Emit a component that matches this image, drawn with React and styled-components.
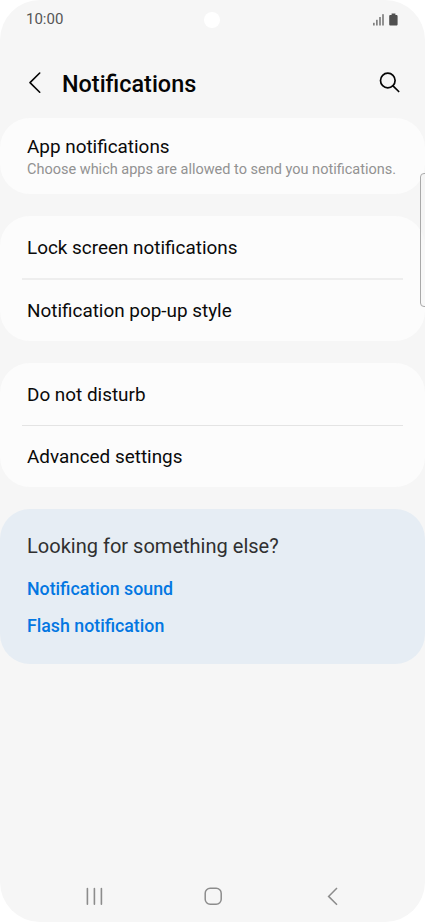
import React, { Fragment } from 'react';
import styled, { createGlobalStyle } from 'styled-components';

const GlobalStyle = createGlobalStyle`
  * {
    box-sizing: border-box;
  }

  body {
    margin: 0;
    background: #ffffff;
    font-family: Roboto, 'Liberation Sans', sans-serif;
  }
`;

const Screen = styled.div`
  position: relative;
  display: flex;
  flex-direction: column;
  width: 425px;
  height: 922px;
  border-radius: 40px;
  background: #f6f6f6;
  overflow: hidden;
`;

const StatusBar = styled.div`
  display: grid;
  grid-template-columns: 1fr 16px 1fr;
  align-items: center;
  height: 39px;
  padding: 0 27px 0 26px;
`;

const Clock = styled.span`
  margin-top: -1px;
  font-size: 15px;
  line-height: 18px;
  color: #555555;
`;

const Camera = styled.span`
  width: 16px;
  height: 16px;
  border-radius: 50%;
  background: #ffffff;
`;

const StatusIcons = styled.div`
  display: flex;
  justify-content: flex-end;
`;

const Header = styled.header`
  display: flex;
  align-items: center;
  height: 79px;
  padding: 8px 24px 0 28px;
`;

const IconButton = styled.button`
  display: flex;
  padding: 0;
  border: none;
  background: none;
`;

const Title = styled.h1`
  flex: 1;
  margin: 2px 0 0 20px;
  font-size: 23.4px;
  font-weight: 500;
  line-height: 28px;
  color: #050505;
`;

const List = styled.main`
  display: flex;
  flex-direction: column;
  gap: 22px;
`;

const Card = styled.section`
  padding: 0 22px;
  border-radius: 30px;
  background: #fcfcfc;
`;

const Row = styled.div`
  display: flex;
  flex-direction: column;
  justify-content: center;
  height: ${(props) => props.$height}px;
  padding: ${(props) => props.$offset}px 5px 0;
`;

const Divider = styled.div`
  height: ${(props) => (props.$soft ? 2 : 1)}px;
  background: ${(props) => (props.$soft ? '#eeeeee' : '#e4e4e4')};
`;

const Label = styled.span`
  font-size: 18.9px;
  line-height: 24px;
  color: #0a0a0a;
`;

const Hint = styled.span`
  font-size: 14.5px;
  line-height: 22px;
  color: #929292;
  white-space: nowrap;
`;

const Suggestions = styled.section`
  display: flex;
  flex-direction: column;
  height: 155px;
  padding: 25px 27px;
  border-radius: 30px;
  background: #e6edf4;
`;

const SuggestionsTitle = styled.h2`
  margin: 0 0 12px;
  font-size: 20.05px;
  font-weight: 400;
  line-height: 25px;
  color: #303030;
`;

const Link = styled.a`
  font-size: 17.75px;
  font-weight: 500;
  line-height: 37px;
  color: #0377e2;
`;

const EdgeHandle = styled.div`
  position: absolute;
  top: 173px;
  right: -6px;
  width: 11px;
  height: 134px;
  border: 1px solid #a9a9a9;
  border-radius: 4px;
  background: rgba(245, 245, 245, 0.6);
`;

const NavBar = styled.nav`
  display: flex;
  justify-content: space-between;
  align-items: center;
  height: 52px;
  margin-top: auto;
  padding: 0 82px 0 84px;
`;

const groups = [
  {
    soft: true,
    rows: [
      { label: 'Lock screen notifications', height: 62, offset: 2 },
      { label: 'Notification pop-up style', height: 61, offset: 0 },
    ],
  },
  {
    soft: false,
    rows: [
      { label: 'Do not disturb', height: 62, offset: 2 },
      { label: 'Advanced settings', height: 61, offset: 0 },
    ],
  },
];

const links = ['Notification sound', 'Flash notification'];

const App = () => {
  return (
    <Screen>
      <GlobalStyle />
      <StatusBar>
        <Clock>10:00</Clock>
        <Camera />
        <StatusIcons>
          <svg width="26" height="14" viewBox="0 0 26 14" fill="#505050">
            <rect x="1.3" y="9.8" width="1.2" height="2.7" />
            <rect x="4.3" y="6.8" width="1.2" height="5.7" />
            <rect x="7.4" y="4" width="1.2" height="8.5" />
            <rect x="10.4" y="1.2" width="1.2" height="11.3" />
            <path d="M19.6 .6h3.8v1.3h.9c.8 0 1.3.5 1.3 1.3v8c0 .9-.5 1.4-1.3 1.4h-5.8c-.8 0-1.3-.5-1.3-1.4v-8c0-.8.5-1.3 1.3-1.3h1.1z" />
          </svg>
        </StatusIcons>
      </StatusBar>

      <Header>
        <IconButton aria-label="Back">
          <svg width="14" height="22" viewBox="0 0 14 22" fill="none" stroke="#050505" strokeWidth="1.6">
            <path d="M11.7 1 2 10.6l9.7 9.6" strokeLinecap="round" strokeLinejoin="round" />
          </svg>
        </IconButton>
        <Title>Notifications</Title>
        <IconButton aria-label="Search">
          <svg width="22" height="22" viewBox="0 0 22 22" fill="none" stroke="#050505" strokeWidth="1.7">
            <circle cx="8.8" cy="8.5" r="7.3" />
            <path d="m14 13.8 5.7 5.7" strokeLinecap="round" />
          </svg>
        </IconButton>
      </Header>

      <List>
        <Card>
          <Row $height={76} $offset={4}>
            <Label>App notifications</Label>
            <Hint>Choose which apps are allowed to send you notifications.</Hint>
          </Row>
        </Card>
        {groups.map((group) => (
          <Card key={group.rows[0].label}>
            {group.rows.map((row, index) => (
              <Fragment key={row.label}>
                {index > 0 && <Divider $soft={group.soft} />}
                <Row $height={row.height} $offset={row.offset}>
                  <Label>{row.label}</Label>
                </Row>
              </Fragment>
            ))}
          </Card>
        ))}
        <Suggestions>
          <SuggestionsTitle>Looking for something else?</SuggestionsTitle>
          {links.map((link) => (
            <Link key={link}>{link}</Link>
          ))}
        </Suggestions>
      </List>

      <EdgeHandle />

      <NavBar>
        <svg width="20" height="20" viewBox="0 0 20 20" stroke="#8c8c8c" strokeWidth="1.6" strokeLinecap="round">
          <path d="M3.4 2.6v15.6M10.4 2.6v15.6M17.4 2.6v15.6" />
        </svg>
        <svg width="20" height="20" viewBox="0 0 20 20" fill="none" stroke="#8c8c8c" strokeWidth="1.5">
          <rect x="1.2" y="2.3" width="16" height="16" rx="5" />
        </svg>
        <svg width="20" height="20" viewBox="0 0 20 20" fill="none" stroke="#8c8c8c" strokeWidth="1.5">
          <path d="M14 2 5.6 10.4 14 18.8" />
        </svg>
      </NavBar>
    </Screen>
  );
};

export default App;
